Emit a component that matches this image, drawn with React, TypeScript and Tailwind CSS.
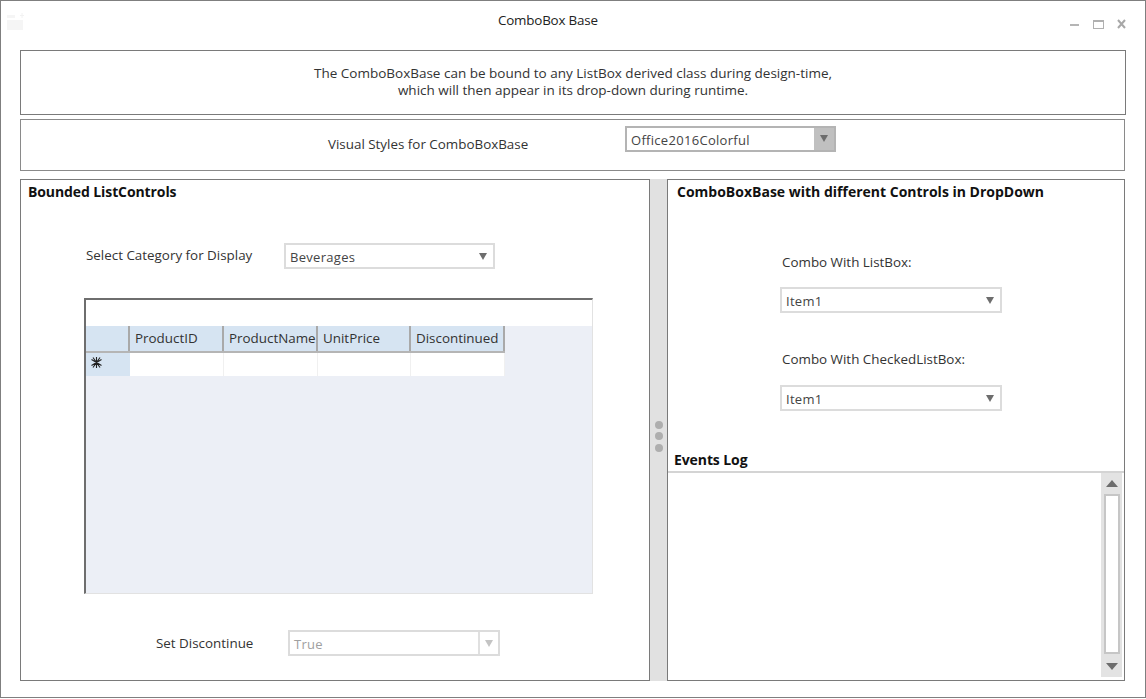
const font = "[font-family:'Open_Sans',sans-serif]";

function Arrow({ className = "border-t-[#6d6d6d]" }: { className?: string }) {
  return <span className={`block w-0 h-0 border-l-[4.5px] border-r-[4.5px] border-t-[7px] border-l-transparent border-r-transparent ${className}`} />;
}

function Combo({ text, w, muted, divided, grey }: { text: string; w: string; muted?: boolean; divided?: boolean; grey?: boolean }) {
  return (
    <div className={`${w} h-[26px] flex items-stretch bg-white border-2 ${grey ? "border-[#b4b4b4]" : "border-[#dcdcdc]"}`}>
      <span className={`flex-1 pl-[4px] text-[13px] leading-[24px] tracking-[0.3px] ${muted ? "text-[#a0a0a0]" : "text-[#444444]"}`}>{text}</span>
      <span className={`w-[20px] flex items-center justify-center ${divided ? "border-l-2 border-[#e0e0e0]" : ""} ${grey ? "bg-[#c0c0c0]" : ""}`}>
        <Arrow className={muted ? "border-t-[#c4c4c4]" : "border-t-[#6d6d6d]"} />
      </span>
    </div>
  );
}

function Head({ text, w }: { text: string; w: string }) {
  return (
    <div className={`${w} h-[25px] bg-[#d6e4f2] border-r-2 border-[#a9a9a9] pl-[5px] text-[13.4px] leading-[25px] text-[#333333] overflow-hidden whitespace-nowrap`}>
      {text}
    </div>
  );
}

function Cell({ w }: { w: string }) {
  return <div className={`${w} h-full bg-white border-r border-[#f0f0f0]`} />;
}

export default function App() {
  return (
    <div className={`w-[1146px] h-[699px] bg-white ${font} text-[#222222] text-[12px]`}>
      <div className="w-[1146px] h-[698px] border border-[#7f7f7f] flex flex-col relative">
        <div className="h-[49px] relative shrink-0">
          <div className="pl-[497px] text-[13.4px] pt-[10px] leading-[18px] text-[#222222] tracking-[-0.2px]">ComboBox Base</div>
          <svg className="absolute left-[6px] top-[12px]" width="17" height="19" viewBox="0 0 17 19">
            <path d="M0 2h8v3H0zM0 7h16v10H0z" fill="#f5f5f5" />
            <path d="M15 0v5M13 2.500h5" stroke="#f2f2f2" />
          </svg>
          <svg className="absolute left-[1068px] top-[17px]" width="62" height="12" viewBox="0 0 62 12">
            <path d="M1 7h9" stroke="#b5b5b5" strokeWidth="2" />
            <rect x="24.500" y="2.500" width="10" height="8" fill="none" stroke="#b0b0b0" />
            <path d="M24.500 3h10" stroke="#b0b0b0" strokeWidth="2" />
            <path d="M49 2l7 8M56 2l-7 8" stroke="#a8a8a8" strokeWidth="2" />
          </svg>
        </div>

        <div className="ml-[19px] w-[1106px] h-[65px] shrink-0 border border-[#7a7a7a] flex flex-col items-center pt-[14px] text-[13.5px] leading-[17px] text-[#333333]">
          <div>The ComboBoxBase can be bound to any ListBox derived class during design-time,</div>
          <div>which will then appear in its drop-down during runtime.</div>
        </div>

        <div className="ml-[19px] mt-[4px] w-[1105px] h-[52px] shrink-0 border border-[#8a8a8a] flex items-center">
          <span className="ml-[307px] w-[297px] text-[13.4px] text-[#333333] -mt-[1px]">Visual Styles for ComboBoxBase</span>
          <div className="-mt-[13px]"><Combo text="Office2016Colorful" w="w-[211px]" grey /></div>
        </div>

        <div className="ml-[19px] mt-[8px] w-[1105px] flex-1 mb-[16px] flex min-h-0">
          <div className="w-[630px] border border-[#7a7a7a] pl-[7px] pt-[3px] flex flex-col">
            <div className="font-bold text-[14px] leading-[18px] text-[#111111] tracking-[-0.1px]">Bounded ListControls</div>
            <div className="flex items-center mt-[42px] ml-[58px]">
              <span className="w-[198px] text-[13.4px] text-[#333333] -mt-[2px]">Select Category for Display</span>
              <Combo text="Beverages" w="w-[211px]" />
            </div>
            <div className="ml-[56px] mt-[29px] w-[509px] h-[296px] border-t-2 border-l-2 border-b border-r border-t-[#6e6e6e] border-l-[#6e6e6e] border-b-[#e2e2e2] border-r-[#e2e2e2] flex flex-col bg-[#eceff6]">
              <div className="h-[26px] bg-white shrink-0" />
              <div className="w-[419px] flex">
                <div className="w-[44px] h-[25px] bg-[#d6e4f2] border-r-2 border-[#a9a9a9]" />
                <Head text="ProductID" w="w-[94px]" />
                <Head text="ProductName" w="w-[94px]" />
                <Head text="UnitPrice" w="w-[93px]" />
                <Head text="Discontinued" w="w-[94px]" />
              </div>
              <div className="w-[419px] h-[2px] bg-[#b5b5b5]" />
              <div className="w-[419px] h-[23px] flex">
                <div className="w-[44px] h-full bg-[#d6e4f2] pl-[4px] pb-[4px] flex items-center">
                  <svg width="13" height="13" viewBox="0 0 13 13"><path d="M6.500 1v11M1.500 3.500l10 6M11.500 3.500l-10 6M3 1.500l7 10M10 1.500l-7 10" stroke="#222" strokeWidth="1.100" /></svg>
                </div>
                <Cell w="w-[94px]" />
                <Cell w="w-[94px]" />
                <Cell w="w-[93px]" />
                <Cell w="w-[94px]" />
              </div>
            </div>
            <div className="flex items-center mt-[36px] ml-[128px]">
              <span className="w-[132px] text-[13.4px] text-[#333333]">Set Discontinue</span>
              <Combo text="True" w="w-[212px]" muted divided />
            </div>
          </div>

          <div className="w-[17px] bg-[#e1e1e1] flex flex-col items-center justify-center gap-[3.5px] pt-[12px]">
            <span className="w-[8px] h-[8px] rounded-full bg-[#aeaeae]" />
            <span className="w-[8px] h-[8px] rounded-full bg-[#aeaeae]" />
            <span className="w-[8px] h-[8px] rounded-full bg-[#aeaeae]" />
          </div>

          <div className="flex-1 border border-[#7a7a7a] flex flex-col">
            <div className="font-bold text-[14px] leading-[18px] text-[#111111] pl-[9px] pt-[3px] h-[22px]">ComboBoxBase with different Controls in DropDown</div>
            <div className="ml-[114px] mt-[51px] text-[13.4px] leading-[18px] text-[#333333]">Combo With ListBox:</div>
            <div className="ml-[112px] mt-[16px]"><Combo text="Item1" w="w-[222px]" /></div>
            <div className="ml-[114px] mt-[37px] text-[13.4px] leading-[18px] text-[#333333]">Combo With CheckedListBox:</div>
            <div className="ml-[112px] mt-[17px]"><Combo text="Item1" w="w-[222px]" /></div>
            <div className="font-bold text-[14px] leading-[18px] text-[#111111] pl-[6px] mt-[40px] h-[20px] tracking-[-0.1px]">Events Log</div>
            <div className="flex-1 border-t-2 border-[#d4d4d4] flex justify-end pr-[2px] pb-[3px] min-h-0">
              <div className="w-[21px] bg-[#e3e3e3] flex flex-col items-center py-[7px] h-full">
                <span className="block w-0 h-0 border-l-[6px] border-r-[6px] border-b-[7px] border-l-transparent border-r-transparent border-b-[#6d6d6d]" />
                <div className="w-[16px] flex-1 mt-[7px] mb-[9px] bg-white border-2 border-[#c6c6c6]" />
                <span className="block w-0 h-0 border-l-[6px] border-r-[6px] border-t-[7px] border-l-transparent border-r-transparent border-t-[#6d6d6d]" />
              </div>
            </div>
          </div>
        </div>
      </div>
    </div>
  );
}
